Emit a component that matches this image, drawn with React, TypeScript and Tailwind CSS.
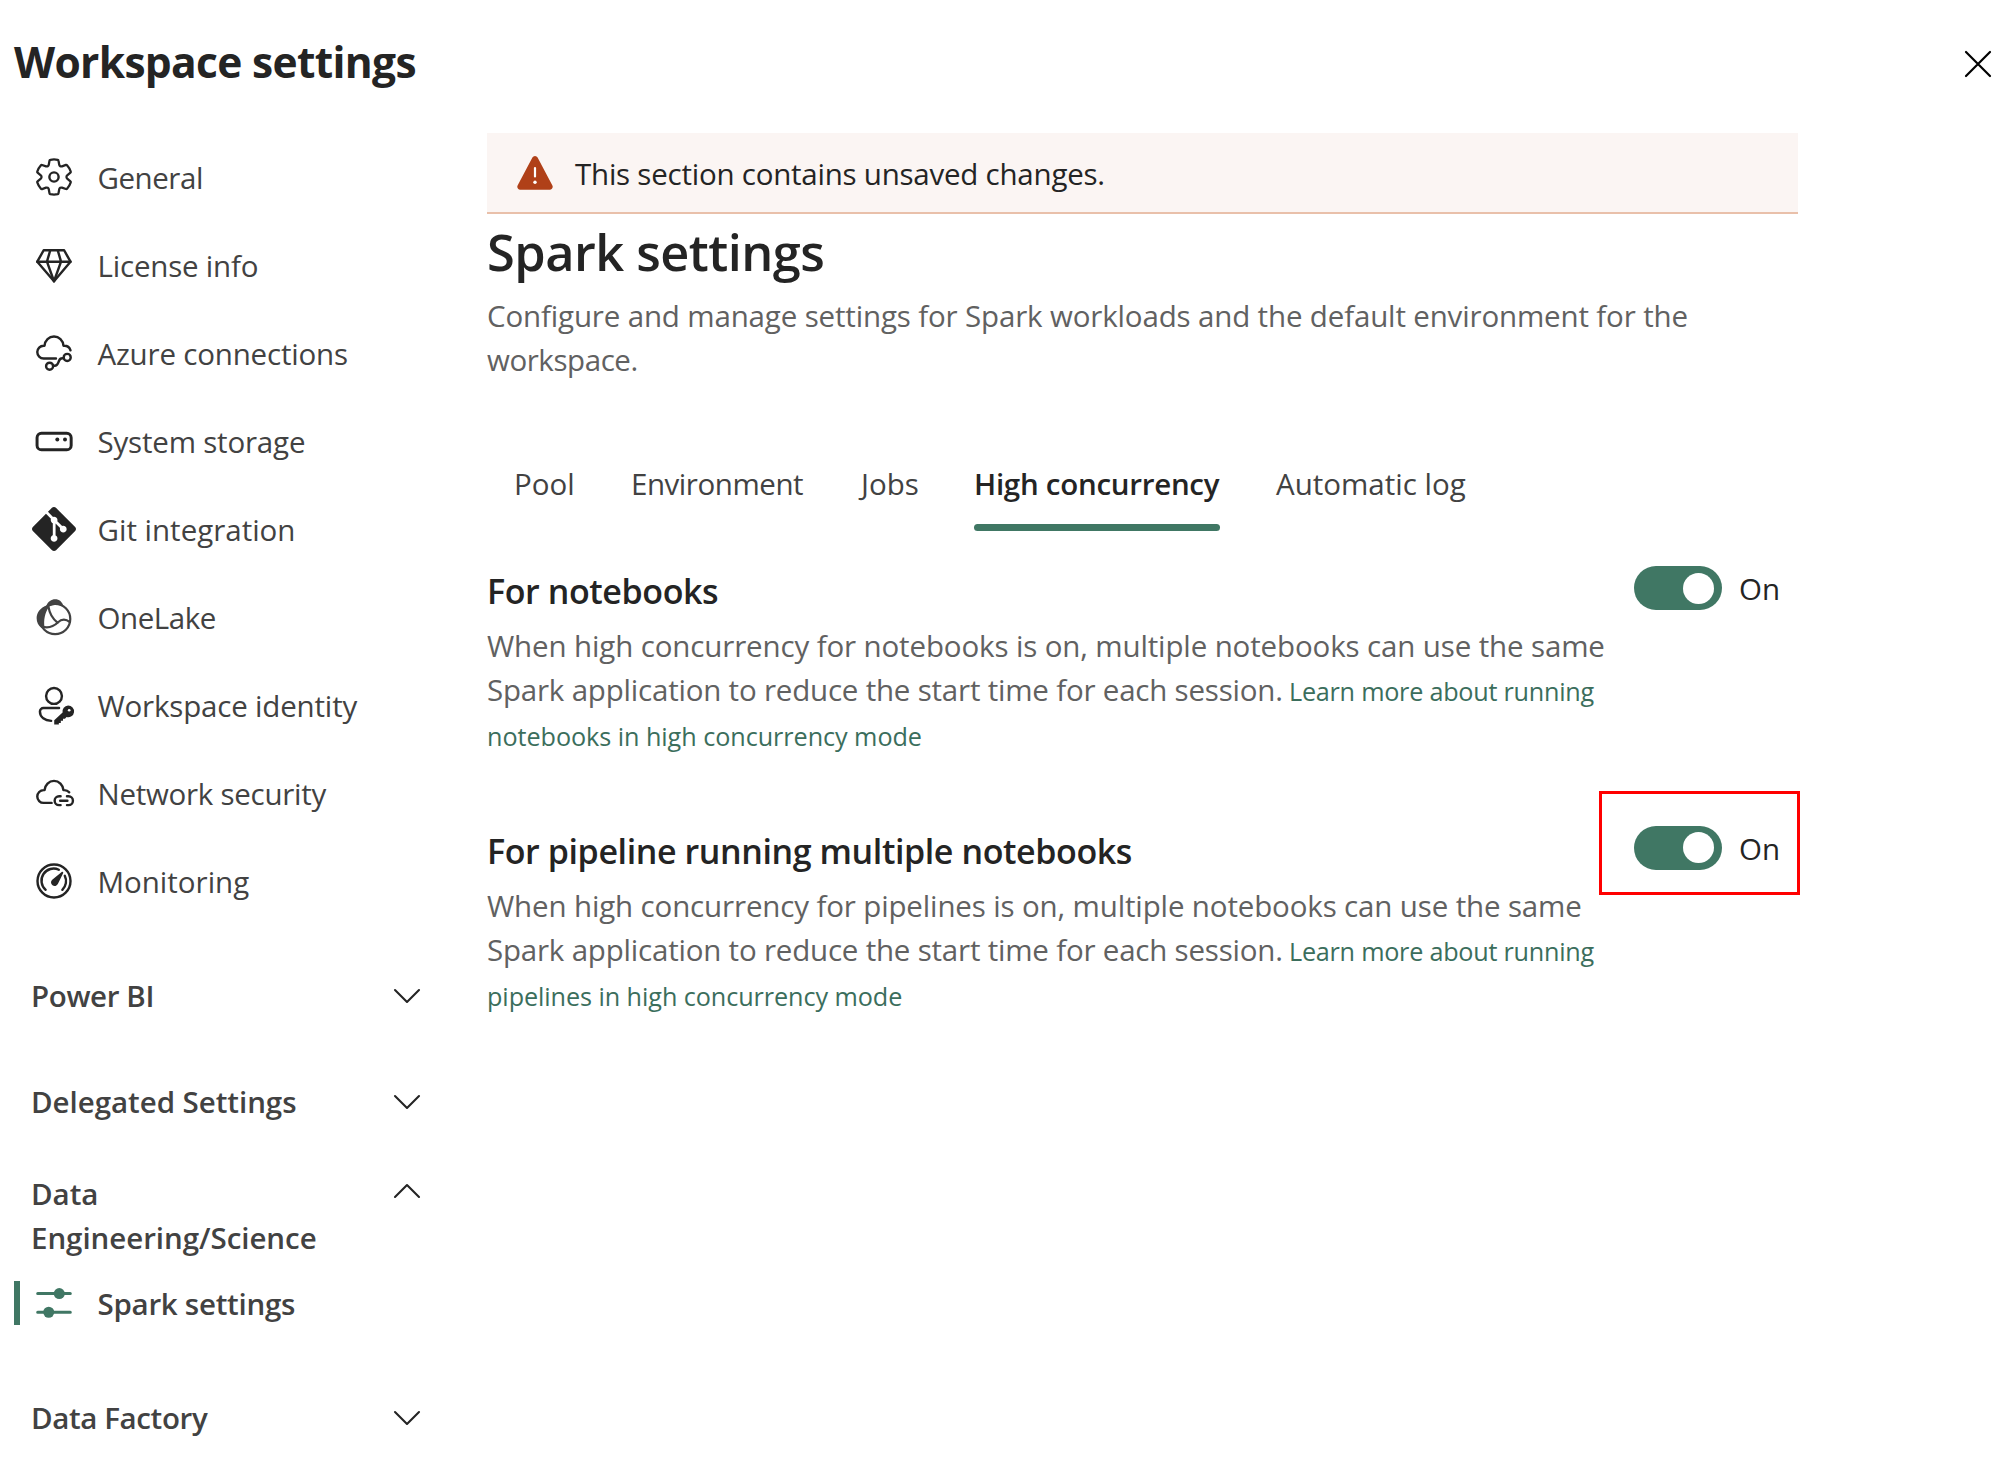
import type { ReactNode } from "react";
import { SiGit } from "react-icons/si";

const INK = "#242424";

function Glyph({ children, className = "text-[#242424]" }: { children: ReactNode; className?: string }) {
  return (
    <svg
      viewBox="0 0 20 20"
      fill="none"
      stroke="currentColor"
      strokeWidth="1.1"
      strokeLinecap="round"
      strokeLinejoin="round"
      className={"size-[44px] shrink-0 " + className}
    >
      {children}
    </svg>
  );
}

const GearIcon = () => (
  <Glyph>
    <g transform="translate(10 10) scale(0.94) translate(-10 -10)">
      <path d="M1.91 7.38A8.5 8.5 0 0 1 3.69 4.3a.5.5 0 0 1 .54-.13l1.92.68a1 1 0 0 0 1.32-.76l.36-2a.5.5 0 0 1 .4-.4 8.53 8.53 0 0 1 3.55 0c.2.04.35.2.38.4l.37 2a1 1 0 0 0 1.32.76l1.92-.68a.5.5 0 0 1 .54.13 8.5 8.5 0 0 1 1.78 3.08c.06.2 0 .4-.15.54l-1.56 1.32a1 1 0 0 0 0 1.52l1.56 1.32a.5.5 0 0 1 .15.54 8.5 8.5 0 0 1-1.78 3.08.5.5 0 0 1-.54.13l-1.92-.68a1 1 0 0 0-1.32.76l-.37 2a.5.5 0 0 1-.38.4 8.53 8.53 0 0 1-3.56 0 .5.5 0 0 1-.39-.4l-.36-2a1 1 0 0 0-1.32-.76l-1.92.68a.5.5 0 0 1-.54-.13 8.5 8.5 0 0 1-1.78-3.08.5.5 0 0 1 .15-.54l1.56-1.32a1 1 0 0 0 0-1.52L2.06 7.92a.5.5 0 0 1-.15-.54Z" />
    </g>
    <circle cx="10" cy="10" r="2.1" />
  </Glyph>
);

const DiamondIcon = () => (
  <Glyph>
    <path d="M5.3 3.3h9.3l2.9 5.2L10 17.4 2.4 8.5z" />
    <path d="M2.4 8.5h15.1M8.3 3.3 6.8 8.5 10 17.4l3.2-8.9-1.5-5.2" />
  </Glyph>
);

const AzureIcon = () => (
  <Glyph>
    <path d="M10.9 12.5H5.3a2.9 2.9 0 0 1 0-5.8h.4c.2-2.4 2-4.2 4.3-4.2s4.1 1.8 4.3 4.2h.4c1.3 0 2.4.8 2.8 2.1" />
    <circle cx="16" cy="12" r="1.6" />
    <circle cx="8" cy="16" r="1.6" />
    <path d="M9.7 15.8h.6c.9 0 1.3-.5 1.6-1.3l.4-1c.3-.8.8-1.1 1.5-1.1h.6" />
  </Glyph>
);

const StorageIcon = () => (
  <Glyph>
    <rect x="2.3" y="6.5" width="15.5" height="7.5" rx="2" strokeWidth="1.35" />
    <circle cx="11.5" cy="9.3" r=".9" fill="currentColor" stroke="none" />
    <circle cx="15" cy="9.3" r=".9" fill="currentColor" stroke="none" />
  </Glyph>
);

const OneLakeIcon = () => (
  <Glyph className="text-[#424242]">
    <circle cx="10.5" cy="10.9" r="6.9" strokeWidth="1" />
    <path
      d="M6.9 4.9C4 5.4 2.1 8 2.1 10.5c0 1.9.8 3.5 2.2 4.4l1.4-.2C5.200 11.500 5.800 8 7.800 5.300z"
      fill="currentColor"
      stroke="none"
    />
    <path
      d="M6.600 4.700C7.300 3 8.800 1.900 10.500 1.900c1.900 0 3.300 1.200 3.800 3.200-2.400-1.100-5.200-.9-7.400.7z"
      fill="currentColor"
      stroke="none"
    />
    <path d="M7.500 5.400c.5 3.200 2 5.500 4.100 7.200" strokeWidth="1" />
    <path d="M4.300 14.300c3 .9 5.400.2 7.400-1.800 1.700-1.600 3.600-1.700 5.500-.2" strokeWidth="1" />
  </Glyph>
);

const IdentityIcon = () => (
  <Glyph>
    <circle cx="10" cy="5.900" r="3.600" />
    <path d="M12.300 11.400H5.200c-.9 0-1.600.7-1.600 1.600 0 2.600 2.300 4 5.100 4.200" />
    <path
      d="M16.400 10.200a2.700 2.700 0 1 1-.7 5.300l-.7.700h-.9v1h-1v1h-.9v.7H10.100v-2l3.800-3.500a2.700 2.700 0 0 1 2.500-3.200z"
      fill="currentColor"
      stroke="none"
    />
    <circle cx="16.900" cy="12.400" r=".6" fill="#fff" stroke="none" />
  </Glyph>
);

const NetworkIcon = () => (
  <Glyph>
    <path d="M8.900 14.500H5.300a2.900 2.900 0 0 1 0-5.800h.4c.2-2.400 2-4.200 4.300-4.200s4.100 1.800 4.300 4.200h.4c.9 0 1.700.4 2.200 1" />
    <path d="M13 11.500h-.7a2 2 0 0 0 0 4h.7M15.900 11.500h.7a2 2 0 0 1 0 4h-.7M12.800 13.500h3.300" />
  </Glyph>
);

const GaugeIcon = () => (
  <Glyph>
    <circle cx="10" cy="10" r="7.500" />
    <path d="M6.200 14a5.500 5.500 0 0 1 6-9.100M14.900 7.600A5.500 5.500 0 0 1 13.800 14" />
    <path
      d="M14 5.900c.2.100.3.300.200.500l-2.400 4.900a1.650 1.650 0 1 1-2.600-1.900l4.300-3.500c.200-.1.300-.1.500 0z"
      fill="currentColor"
      stroke="none"
    />
  </Glyph>
);

const SlidersIcon = () => (
  <Glyph className="text-[#407764]">
    <path d="M2.600 5.700h14.800M2.600 14.200h14.800" strokeWidth="1.400" />
    <circle cx="12.400" cy="5.700" r="2.500" fill="currentColor" stroke="none" />
    <circle cx="7.600" cy="14.200" r="2.500" fill="currentColor" stroke="none" />
  </Glyph>
);

const Chevron = ({ up = false }: { up?: boolean }) => (
  <svg
    viewBox="0 0 28 16"
    fill="none"
    stroke={INK}
    strokeWidth="2.100"
    strokeLinecap="round"
    strokeLinejoin="round"
    className={up ? "mt-[12px] h-4 w-7 shrink-0" : "mt-[15px] h-4 w-7 shrink-0"}
  >
    <path d={up ? "M2 14 14 2l12 12" : "M2 2l12 12L26 2"} />
  </svg>
);

const items: { label: string; icon: ReactNode; tracking: string }[] = [
  { label: "General", icon: <GearIcon />, tracking: "tracking-[-0.45px]" },
  { label: "License info", icon: <DiamondIcon />, tracking: "tracking-[-0.2px]" },
  { label: "Azure connections", icon: <AzureIcon />, tracking: "tracking-[-0.18px]" },
  { label: "System storage", icon: <StorageIcon />, tracking: "tracking-[-0.19px]" },
  {
    label: "Git integration",
    icon: <SiGit className="size-[44px] shrink-0 text-[#242424]" />,
    tracking: "tracking-normal",
  },
  { label: "OneLake", icon: <OneLakeIcon />, tracking: "tracking-[-0.45px]" },
  { label: "Workspace identity", icon: <IdentityIcon />, tracking: "tracking-[-0.18px]" },
  { label: "Network security", icon: <NetworkIcon />, tracking: "tracking-[-0.27px]" },
  { label: "Monitoring", icon: <GaugeIcon />, tracking: "tracking-normal" },
];

function Group({ children, up = false, className }: { children: ReactNode; up?: boolean; className: string }) {
  return (
    <button className={"flex w-full items-start justify-between pr-[66px] pl-[31px] text-left font-semibold " + className}>
      <span className="pt-px">{children}</span>
      <Chevron up={up} />
    </button>
  );
}

function Toggle({ thumb }: { thumb: string }) {
  return (
    <div className="flex gap-[17px]">
      <span className={"flex h-[44px] w-[88px] justify-end rounded-full bg-[#407764] pr-2 " + thumb}>
        <span className="size-[31px] rounded-full bg-white" />
      </span>
      <span className="pt-px text-[#242424]">On</span>
    </div>
  );
}

function Setting({
  title,
  first,
  firstTracking,
  last,
  lastTracking,
  toggle,
}: {
  title: string;
  first: string;
  firstTracking: string;
  last: string;
  lastTracking: string;
  toggle: ReactNode;
}) {
  return (
    <section className="flex h-[260px] justify-between">
      <div className="pt-px whitespace-nowrap">
        <h2 className="text-[34px] leading-[48px] font-semibold tracking-[-0.4px] text-[#242424]">{title}</h2>
        <p className="mt-[9px] text-[#616161]">
          <span className={"block " + firstTracking}>{first}</span>
          <span className="flex items-baseline">
            <span className="w-[802px] tracking-[-0.2px]">
              Spark application to reduce the start time for each session.
            </span>
            <a className="text-[25.2px] tracking-[-0.24px] text-[#3b6e5c]">Learn more about running</a>
          </span>
          <a className={"block pt-px text-[25.2px] text-[#3b6e5c] " + lastTracking}>{last}</a>
        </p>
      </div>
      {toggle}
    </section>
  );
}

export default function App() {
  return (
    <div className="h-[1475px] w-[2006px] overflow-hidden bg-white font-['Open_Sans',sans-serif] text-[29.5px] leading-[44px] text-[#424242]">
      <header className="flex h-[133px] items-start justify-between pt-[32px] pr-[12px] pl-[14px]">
        <h1 className="text-[42.5px] leading-[60px] font-bold tracking-[-0.67px] text-[#242424]">Workspace settings</h1>
        <svg viewBox="0 0 32 32" className="mt-[16px] size-8" stroke="#000" strokeWidth="2.200" strokeLinecap="round">
          <path d="M4 4l24 24M28 4L4 28" />
        </svg>
      </header>
      <div className="flex">
        <aside className="w-[487px] shrink-0">
          <nav>
            {items.map((item) => (
              <a key={item.label} className="flex h-[88px] items-center gap-[21.5px] pl-8">
                {item.icon}
                <span className={"pt-[2px] " + item.tracking}>{item.label}</span>
              </a>
            ))}
          </nav>
          <Group className="mt-[48px] h-[44px] tracking-[-0.37px]">Power BI</Group>
          <Group className="mt-[62px] h-[44px] tracking-[-0.04px]">Delegated Settings</Group>
          <Group up className="mt-[48px] h-[88px] tracking-[-0.05px]">
            Data
            <br />
            Engineering/Science
          </Group>
          <a className="mt-[22px] ml-[14px] flex h-[44px] items-center border-l-[6px] border-[#407764] pl-[12px] font-semibold">
            <SlidersIcon />
            <span className="pt-[2px] pl-[21.5px] tracking-[-0.27px]">Spark settings</span>
          </a>
          <Group className="mt-[70px] h-[44px] tracking-[-0.38px]">Data Factory</Group>
        </aside>

        <main className="w-[1311px]">
          <div className="flex h-[81px] items-center border-b-2 border-[#e9c0aa] bg-[#fbf5f3] pl-[30px]">
            <svg viewBox="0 0 36 34" className="h-[34px] w-9 shrink-0">
              <path
                d="M15.400 1.600a3 3 0 0 1 5.200 0l14.800 27.900c1 2-.4 4.300-2.600 4.300H3.200C1 33.800-.4 31.500.6 29.500z"
                fill="#b04018"
              />
              <path d="M18 12v8.500" stroke="#fff" strokeWidth="2.200" strokeLinecap="round" />
              <circle cx="18" cy="26.300" r="1.700" fill="#fff" />
            </svg>
            <span className="pt-[3px] pl-[22px] tracking-[-0.23px] text-[#242424]">
              This section contains unsaved changes.
            </span>
          </div>

          <h2 className="mt-[3px] text-[50.5px] leading-[70px] font-semibold tracking-[-0.53px] text-[#242424]">
            Spark settings
          </h2>
          <p className="mt-[7px] whitespace-nowrap text-[#616161]">
            <span className="block tracking-[-0.15px]">
              Configure and manage settings for Spark workloads and the default environment for the
            </span>
            <span className="block tracking-[-0.43px]">workspace.</span>
          </p>

          <div className="mt-[80px] flex gap-[56px] pl-[27px] whitespace-nowrap">
            <span className="w-[60px]">Pool</span>
            <span className="w-[174px] pl-px tracking-[-0.45px]">Environment</span>
            <span className="w-[58px] pl-px">Jobs</span>
            <span className="w-[246px] font-semibold tracking-[-0.27px] text-[#242424]">
              High concurrency
              <span className="mt-[18px] block h-[7px] rounded-full bg-[#407764]" />
            </span>
            <span>Automatic log</span>
          </div>

          <div className="mt-[35px]">
            <Setting
              title="For notebooks"
              first="When high concurrency for notebooks is on, multiple notebooks can use the same"
              firstTracking="tracking-[-0.13px]"
              last="notebooks in high concurrency mode"
              lastTracking="tracking-[-0.05px]"
              toggle={
                <div className="w-[164px]">
                  <Toggle thumb="pt-[7px]" />
                </div>
              }
            />
            <Setting
              title="For pipeline running multiple notebooks"
              first="When high concurrency for pipelines is on, multiple notebooks can use the same"
              firstTracking="tracking-[-0.14px]"
              last="pipelines in high concurrency mode"
              lastTracking="tracking-[-0.07px]"
              toggle={
                <div className="-mt-[35px] -mr-[2px] h-[104px] w-[201px] border-[3px] border-[#ff0000] pt-[32px] pl-[32px]">
                  <Toggle thumb="pt-[6px]" />
                </div>
              }
            />
          </div>
        </main>
      </div>
    </div>
  );
}
